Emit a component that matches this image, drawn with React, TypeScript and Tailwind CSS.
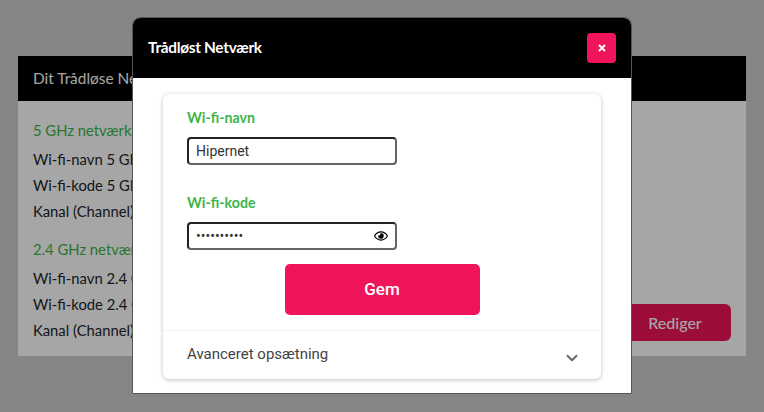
import { ChevronDown } from 'lucide-react';
import { FaRegEye } from 'react-icons/fa';

const wifi5 = ['Wi-fi-navn 5 GHz', 'Wi-fi-kode 5 GHz', 'Kanal (Channel)'];
const wifi24 = ['Wi-fi-navn 2.4 GHz', 'Wi-fi-kode 2.4 GHz', 'Kanal (Channel)'];

function SettingsGroup({ title, rows }: { title: string; rows: string[] }) {
  return (
    <div className="flex flex-col">
      <div className="h-[26px] leading-[26px] text-[14.8px] text-[#3db54a]">{title}</div>
      <div className="mt-[3px]">
        {rows.map((row) => (
          <div key={row} className="h-[26px] leading-[26px] text-[14.8px] text-[#212529]">
            {row}
          </div>
        ))}
      </div>
    </div>
  );
}

const inputClass =
  'w-full h-[28px] rounded-[4px] border-2 border-t-[#222222] border-l-[#222222] border-b-[#666666] border-r-[#666666] pl-[7px] text-[14px] text-[#333333] outline-none font-["Roboto",sans-serif]';

export default function App() {
  return (
    <div className="relative w-[764px] h-[412px] overflow-hidden bg-[#cdcdcd] font-['Lato',sans-serif]">
      {/* Page behind the dialog */}
      <div className="pt-[56px] px-[18px]">
        <div className="h-[300px] bg-white flex flex-col">
          <div className="h-[45px] shrink-0 bg-black px-[15px] flex items-center text-[15.4px] text-white">
            Dit Trådløse Netværk
          </div>
          <div className="flex-1 flex justify-between px-[15px] pt-[16px] pb-[13px]">
            <div className="flex flex-col gap-[12px]">
              <SettingsGroup title="5 GHz netværk" rows={wifi5} />
              <SettingsGroup title="2.4 GHz netværk" rows={wifi24} />
            </div>
            <button className="self-end w-[112px] h-[37px] mb-[2px] rounded-[6px] bg-[#f0145a] text-white text-[16px] font-medium">
              Rediger
            </button>
          </div>
        </div>
      </div>

      {/* Dialog overlay */}
      <div className="absolute inset-0 bg-black/35 pt-[17px] flex justify-center">
        <div className="w-[500px] h-[377px] flex flex-col rounded-t-[8px] bg-white border border-[#555555] overflow-hidden">
          <div className="h-[60px] shrink-0 bg-black flex items-center justify-between px-[15px]">
            <h2 className="text-[15.4px] font-bold text-white tracking-[-0.3px]">Trådløst Netværk</h2>
            <button className="w-[29px] h-[30px] rounded-[4px] bg-[#f0145a] text-white flex items-center justify-center">
              <svg width="8" height="8" viewBox="0 0 8 8" aria-hidden="true">
                <path d="M1 1l6 6M7 1L1 7" stroke="currentColor" strokeWidth="2" />
              </svg>
            </button>
          </div>

          <div className="flex-1 px-[30px] pt-[16px]">
            <div className="h-[285px] rounded-[6px] bg-white shadow-[0_1px_4px_rgba(0,0,0,0.25)] flex flex-col">
              <div className="flex-1 px-[24px] pt-[13px] flex flex-col">
                <label className="h-[22px] leading-[22px] text-[14.2px] font-bold text-[#3db54a]">Wi-fi-navn</label>
                <div className="w-[210px] mt-[8px]">
                  <input className={inputClass} value="Hipernet" readOnly />
                </div>
                <label className="h-[22px] leading-[22px] text-[14.2px] font-bold text-[#3db54a] mt-[27px]">Wi-fi-kode</label>
                <div className="relative w-[210px] mt-[8px]">
                  <input className={`${inputClass} text-[13px]`} type="password" value="hipernet12" readOnly />
                  <FaRegEye className="absolute right-[9px] top-[7px] w-[14px] h-[14px] text-black" />
                </div>
                <button className="self-center w-[195px] h-[51px] mt-[14px] rounded-[5px] bg-[#f0145a] text-white text-[17px] font-medium font-['Roboto',sans-serif]">
                  Gem
                </button>
              </div>
              <div className="h-[49px] shrink-0 border-t border-[#f2f2f2] pl-[24px] pr-[20px] flex items-center justify-between text-[15px] text-[#444444] font-['Roboto',sans-serif]">
                <span className="-mt-[2px]">Avanceret opsætning</span>
                <ChevronDown className="w-[18px] h-[18px] mt-[5px] text-[#666666]" strokeWidth={2.5} />
              </div>
            </div>
          </div>
        </div>
      </div>
    </div>
  );
}
